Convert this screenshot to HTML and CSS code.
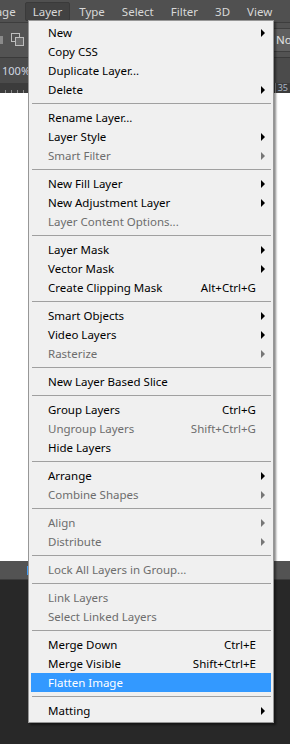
FILE: index.html
```html
<!DOCTYPE html>
<html lang="en">
  <head>
    <meta charset="UTF-8">
    <meta name="viewport" content="width=device-width, initial-scale=1.0">
    <title>Layer menu</title>
    <link rel="stylesheet" href="styles.css">
  </head>
  <body>
    <div class="app">
      <div class="menubar">
        <span class="menubar-item">Image</span>
        <span class="menubar-item open">Layer</span>
        <span class="menubar-item">Type</span>
        <span class="menubar-item">Select</span>
        <span class="menubar-item">Filter</span>
        <span class="menubar-item">3D</span>
        <span class="menubar-item">View</span>
      </div>

      <div class="options-bar">
        <span class="opt-stub"></span>
        <svg class="opt-icon" width="14" height="14" viewBox="0 0 14 14">
          <rect x="0.5" y="0.5" width="8" height="8" fill="none" stroke="#bdbdbd"/>
          <rect x="4.5" y="4.5" width="8" height="8" fill="#6a6a6a" stroke="#bdbdbd"/>
        </svg>
        <span class="opt-spacer"></span>
        <span class="blend-select">No</span>
      </div>

      <div class="doc-tabs">
        <span class="zoom-level">100%</span>
      </div>

      <div class="ruler">
        <span class="ruler-ticks"></span>
        <span class="ruler-label">35</span>
      </div>

      <div class="canvas"></div>

      <div class="panel-head">
        <span class="panel-mark"></span>
      </div>

      <div class="dock"></div>

      <div class="menu">
        <div class="menu-item">New<span></span><i class="arrow"></i></div>
        <div class="menu-item">Copy CSS<span></span><i></i></div>
        <div class="menu-item">Duplicate Layer...<span></span><i></i></div>
        <div class="menu-item">Delete<span></span><i class="arrow"></i></div>
        <div class="menu-sep"></div>
        <div class="menu-item">Rename Layer...<span></span><i></i></div>
        <div class="menu-item">Layer Style<span></span><i class="arrow"></i></div>
        <div class="menu-item disabled">Smart Filter<span></span><i class="arrow"></i></div>
        <div class="menu-sep"></div>
        <div class="menu-item">New Fill Layer<span></span><i class="arrow"></i></div>
        <div class="menu-item">New Adjustment Layer<span></span><i class="arrow"></i></div>
        <div class="menu-item disabled">Layer Content Options...<span></span><i></i></div>
        <div class="menu-sep"></div>
        <div class="menu-item">Layer Mask<span></span><i class="arrow"></i></div>
        <div class="menu-item">Vector Mask<span></span><i class="arrow"></i></div>
        <div class="menu-item">Create Clipping Mask<span class="shortcut">Alt+Ctrl+G</span><i></i></div>
        <div class="menu-sep"></div>
        <div class="menu-item">Smart Objects<span></span><i class="arrow"></i></div>
        <div class="menu-item">Video Layers<span></span><i class="arrow"></i></div>
        <div class="menu-item disabled">Rasterize<span></span><i class="arrow"></i></div>
        <div class="menu-sep"></div>
        <div class="menu-item">New Layer Based Slice<span></span><i></i></div>
        <div class="menu-sep"></div>
        <div class="menu-item">Group Layers<span class="shortcut">Ctrl+G</span><i></i></div>
        <div class="menu-item disabled">Ungroup Layers<span class="shortcut">Shift+Ctrl+G</span><i></i></div>
        <div class="menu-item">Hide Layers<span></span><i></i></div>
        <div class="menu-sep"></div>
        <div class="menu-item">Arrange<span></span><i class="arrow"></i></div>
        <div class="menu-item disabled">Combine Shapes<span></span><i class="arrow"></i></div>
        <div class="menu-sep"></div>
        <div class="menu-item disabled">Align<span></span><i class="arrow"></i></div>
        <div class="menu-item disabled">Distribute<span></span><i class="arrow"></i></div>
        <div class="menu-sep"></div>
        <div class="menu-item disabled">Lock All Layers in Group...<span></span><i></i></div>
        <div class="menu-sep"></div>
        <div class="menu-item disabled">Link Layers<span></span><i></i></div>
        <div class="menu-item disabled">Select Linked Layers<span></span><i></i></div>
        <div class="menu-sep"></div>
        <div class="menu-item">Merge Down<span class="shortcut">Ctrl+E</span><i></i></div>
        <div class="menu-item">Merge Visible<span class="shortcut">Shift+Ctrl+E</span><i></i></div>
        <div class="menu-item selected">Flatten Image<span></span><i></i></div>
        <div class="menu-sep"></div>
        <div class="menu-item">Matting<span></span><i class="arrow"></i></div>
      </div>
    </div>
  </body>
</html>
```

FILE: styles.css
```css
html,
body {
  margin: 0;
  padding: 0;
}

body {
  font-family:
    "Segoe UI",
    "Noto Sans",
    sans-serif;
  font-size: 11.5px;
  background: #282828;
  overflow: hidden;
}

.app {
  position: relative;
  width: 290px;
  height: 744px;
  display: flex;
  flex-direction: column;
}

/* top application menu bar */

.menubar {
  height: 22px;
  background: #505050;
  display: flex;
  align-items: center;
  margin-left: -27px;
  color: #d8d8d8;
  white-space: nowrap;
}

.menubar-item {
  padding: 0 7px;
  margin-right: 1px;
  height: 19px;
  line-height: 17px;
  border: 1px solid transparent;
  box-sizing: border-box;
}

.menubar-item.open {
  background: #424242;
  border-color: #3a3a3a;
  border-radius: 2px;
}

/* tool options */

.options-bar {
  height: 34px;
  background: #535353;
  border-top: 1px solid #3d3d3d;
  border-bottom: 1px solid #3a3a3a;
  display: flex;
  align-items: center;
  gap: 8px;
}

.opt-stub {
  width: 3px;
  height: 8px;
  background: #8a8a8a;
}

.opt-spacer {
  flex: 1;
}

.blend-select {
  width: 14px;
  height: 22px;
  line-height: 22px;
  padding-left: 4px;
  background: #5f5f5f;
  border: 1px solid #3f3f3f;
  border-right: none;
  color: #e4e4e4;
  box-sizing: content-box;
  overflow: hidden;
}

.doc-tabs {
  height: 25px;
  background: #4b4b4b;
  display: flex;
  align-items: center;
  padding-left: 2px;
}

.zoom-level {
  color: #d0d6e0;
  font-size: 11px;
}

.ruler {
  height: 10px;
  background: #3c3c3c;
  display: flex;
  align-items: flex-end;
  justify-content: space-between;
}

.ruler-ticks {
  width: 28px;
  height: 3px;
  background: repeating-linear-gradient(90deg, transparent 0 5px, #8a8a8a 5px 6px);
}

.ruler-label {
  color: #a9b4c4;
  font-size: 9px;
  line-height: 10px;
  padding-right: 2px;
  border-left: 1px solid #8a8a8a;
  padding-left: 2px;
}

.canvas {
  height: 468px;
  background: #fff;
}

.panel-head {
  height: 18px;
  background: #535353;
  border-bottom: 1px solid #3c3c3c;
  display: flex;
  align-items: center;
}

.panel-mark {
  width: 2px;
  height: 9px;
  margin-left: 27px;
  background: #3f9cf7;
}

.dock {
  flex: 1;
  background: #282828;
}

/* the open dropdown */

.menu {
  position: absolute;
  left: 28px;
  top: 20px;
  width: 246px;
  padding: 2px;
  box-sizing: border-box;
  background: #f0f0f0;
  border: 1px solid #979797;
  box-shadow: 2px 2px 2px rgba(0, 0, 0, 0.45);
  color: #000;
}

.menu-item {
  height: 19px;
  line-height: 19px;
  display: grid;
  grid-template-columns: 1fr auto 15px;
  align-items: center;
  padding-left: 17px;
  white-space: nowrap;
}

.menu-item.disabled {
  color: #6d6d6d;
}

.menu-item.selected {
  background: #3399ff;
  color: #fff;
}

.menu-item i {
  display: block;
  width: 0;
  height: 0;
}

.menu-item i.arrow {
  margin-left: 5px;
  border-left: 4px solid #000;
  border-top: 4px solid transparent;
  border-bottom: 4px solid transparent;
}

.menu-item.disabled i.arrow {
  border-left-color: #777;
}

.menu-sep {
  height: 9px;
  display: flex;
  align-items: center;
  padding-left: 1px;
}

.menu-sep::after {
  content: "";
  flex: 1;
  height: 1px;
  background: #a0a0a0;
}
```
